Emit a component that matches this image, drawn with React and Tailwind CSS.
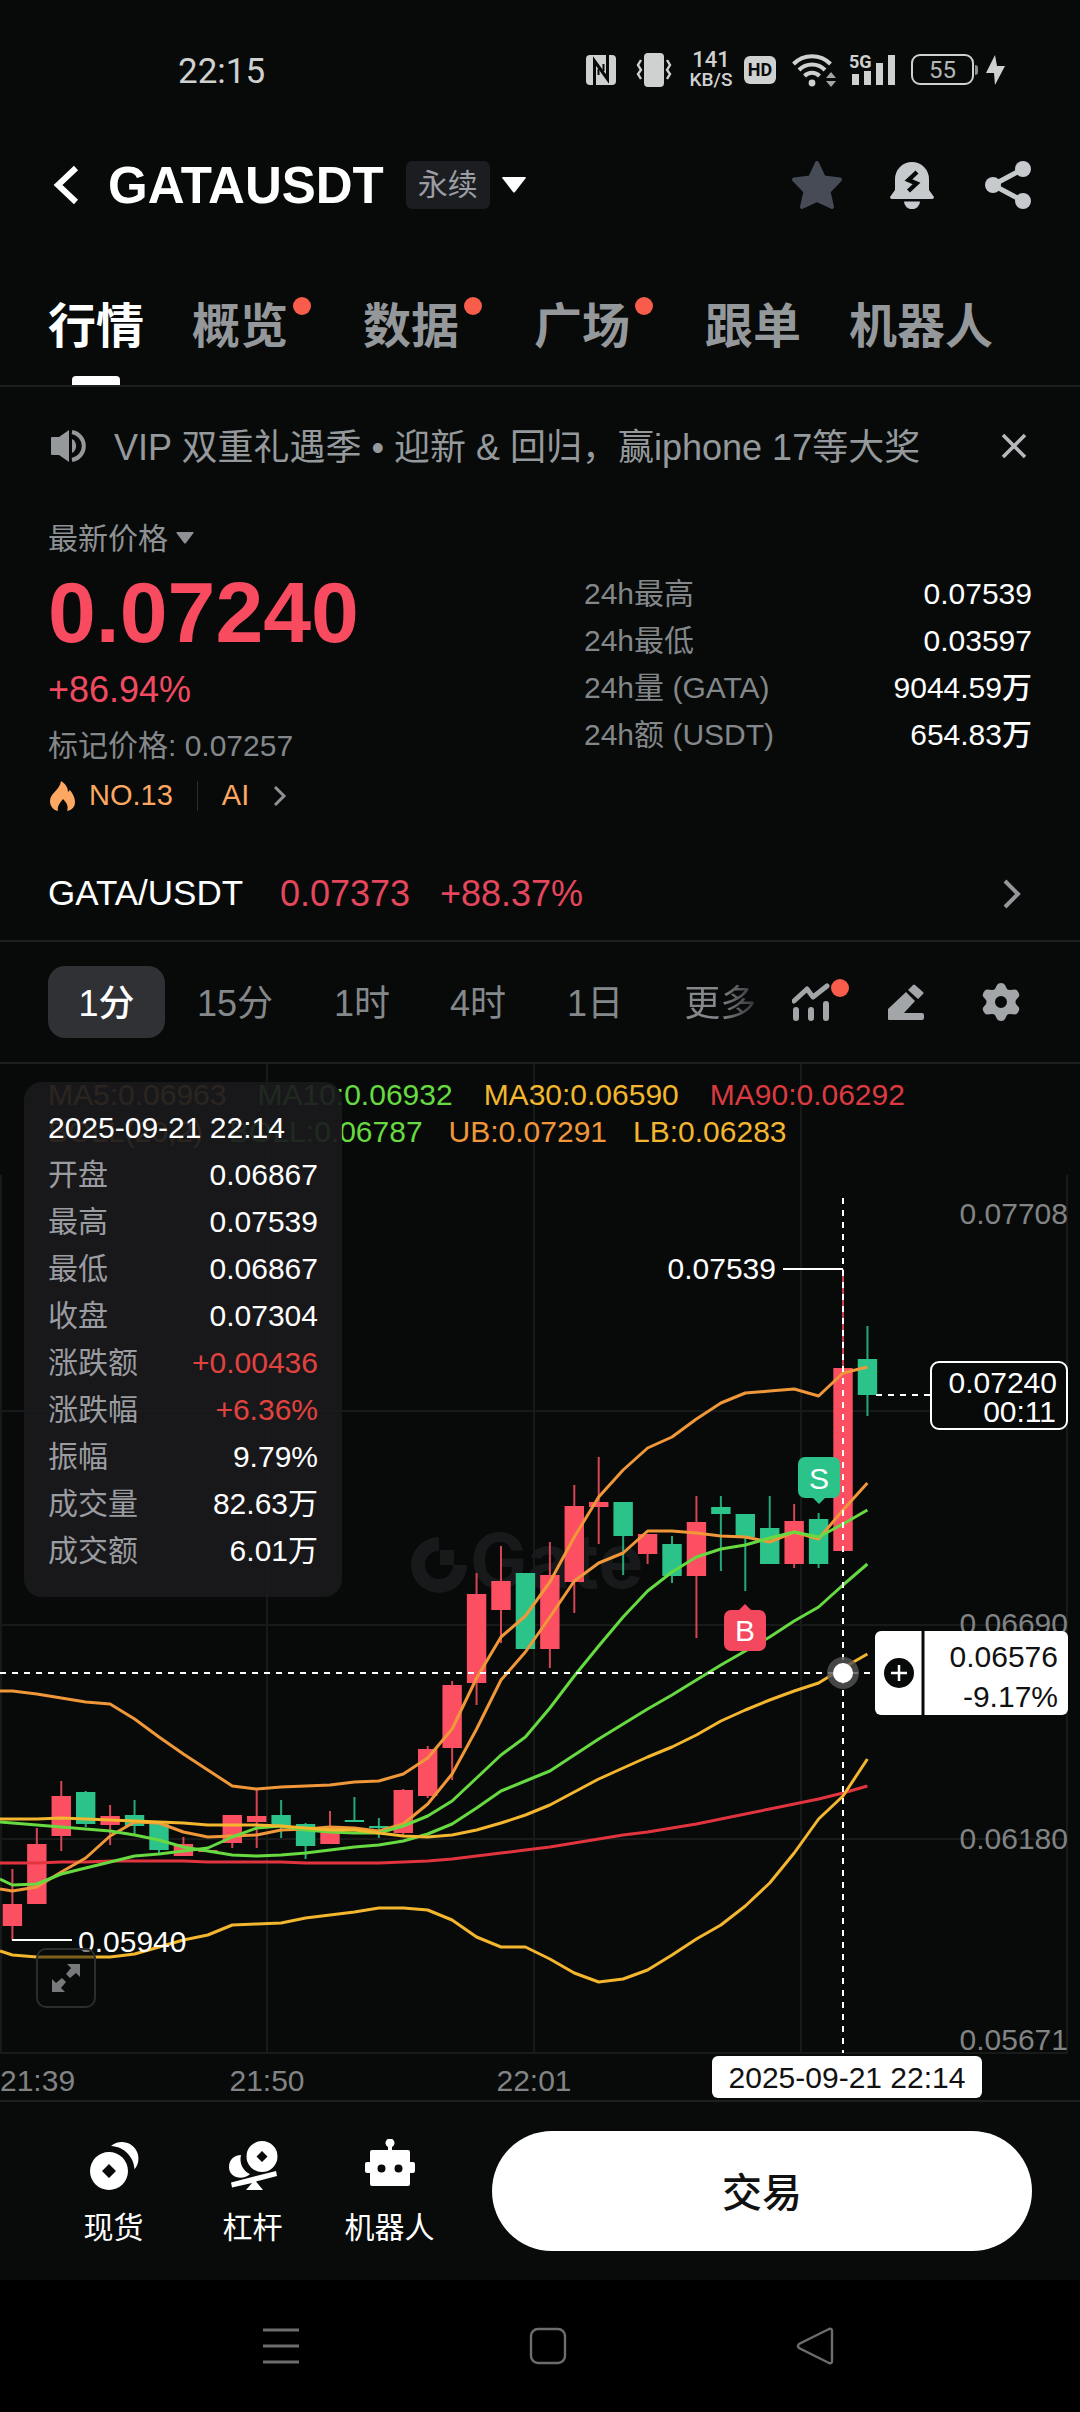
import React from "react";

const UP = "#fc4f61";
const DOWN = "#2cc38a";

/* [bodyTop, bodyBottom, wickTop, wickBottom, rising] in chart units */
const CANDLES = [
  [1904, 1926, 1869, 1940, 1],
  [1844, 1904, 1828, 1904, 1],
  [1796, 1836, 1781, 1851, 1],
  [1792, 1824, 1791, 1827, 0],
  [1816, 1825, 1805, 1845, 1],
  [1815, 1826, 1800, 1835, 0],
  [1824, 1850, 1824, 1854, 0],
  [1844, 1856, 1837, 1856, 1],
  [1850, 1852, 1850, 1852, 1],
  [1815, 1843, 1815, 1848, 1],
  [1816, 1822, 1790, 1848, 1],
  [1815, 1826, 1800, 1838, 0],
  [1824, 1846, 1823, 1859, 0],
  [1827, 1844, 1811, 1844, 1],
  [1820, 1822, 1797, 1822, 0],
  [1826, 1828, 1818, 1838, 0],
  [1790, 1833, 1789, 1835, 1],
  [1749, 1796, 1746, 1798, 1],
  [1685, 1748, 1681, 1780, 1],
  [1594, 1683, 1573, 1705, 1],
  [1581, 1610, 1546, 1643, 1],
  [1573, 1649, 1573, 1649, 0],
  [1575, 1649, 1542, 1668, 1],
  [1506, 1582, 1485, 1613, 1],
  [1502, 1507, 1457, 1544, 1],
  [1502, 1536, 1502, 1575, 0],
  [1534, 1554, 1534, 1564, 1],
  [1544, 1576, 1536, 1583, 0],
  [1522, 1576, 1496, 1638, 1],
  [1507, 1514, 1496, 1571, 0],
  [1514, 1537, 1514, 1591, 0],
  [1528, 1564, 1496, 1564, 0],
  [1521, 1564, 1504, 1568, 1],
  [1519, 1564, 1513, 1568, 0],
  [1368, 1551, 1269, 1551, 1],
  [1359, 1395, 1326, 1416, 0],
];

/* First value sits on the left edge, the rest on the candle centres. */
const LINES = [
  { color: "#e2343e", ys: [1863, 1863, 1863, 1862, 1862, 1861, 1861, 1861, 1861, 1862, 1862, 1862, 1862, 1863, 1863, 1863, 1863, 1862, 1861, 1859, 1856, 1853, 1850, 1847, 1843, 1839, 1835, 1832, 1828, 1824, 1819, 1814, 1809, 1804, 1799, 1793, 1786] },
  { color: "#f0973a", ys: [1691, 1691, 1694, 1698, 1702, 1704, 1719, 1737, 1754, 1770, 1786, 1789, 1787, 1786, 1785, 1782, 1781, 1774, 1758, 1729, 1678, 1637, 1616, 1582, 1537, 1497, 1470, 1448, 1437, 1419, 1403, 1393, 1391, 1389, 1396, 1373, 1367] },
  { color: "#f0973a", ys: [1889, 1891, 1887, 1872, 1858, 1836, 1822, 1823, 1832, 1837, 1836, 1835, 1830, 1829, 1827, 1828, 1831, 1824, 1804, 1774, 1729, 1680, 1652, 1617, 1581, 1563, 1553, 1531, 1531, 1533, 1536, 1537, 1542, 1532, 1539, 1510, 1483] },
  { color: "#67d941", ys: [1822, 1823, 1825, 1827, 1829, 1831, 1835, 1840, 1847, 1851, 1855, 1856, 1855, 1853, 1850, 1847, 1845, 1841, 1834, 1824, 1808, 1791, 1781, 1771, 1755, 1739, 1724, 1709, 1695, 1680, 1665, 1651, 1637, 1621, 1607, 1585, 1564] },
  { color: "#67d941", ys: [1879, 1885, 1884, 1874, 1868, 1862, 1856, 1854, 1851, 1848, 1837, 1828, 1826, 1830, 1832, 1833, 1833, 1826, 1816, 1801, 1778, 1755, 1737, 1708, 1676, 1646, 1617, 1591, 1572, 1557, 1549, 1545, 1538, 1532, 1537, 1524, 1510] },
  { color: "#f3b62e", ys: [1819, 1819, 1819, 1818, 1819, 1820, 1821, 1822, 1823, 1825, 1825, 1825, 1826, 1828, 1830, 1830, 1833, 1836, 1837, 1835, 1830, 1823, 1815, 1805, 1792, 1779, 1768, 1757, 1747, 1735, 1721, 1710, 1700, 1691, 1683, 1668, 1654] },
  { color: "#f3b62e", ys: [1951, 1955, 1957, 1957, 1957, 1957, 1954, 1947, 1940, 1935, 1925, 1924, 1923, 1918, 1915, 1912, 1908, 1908, 1910, 1920, 1937, 1947, 1947, 1959, 1973, 1982, 1979, 1970, 1955, 1939, 1925, 1906, 1883, 1853, 1819, 1796, 1759] },
];

const STEP = 24.43;
const cx = (i) => 12.4 + STEP * i;

const linePoints = (ys) =>
  ys.map((y, i) => `${i === 0 ? 0 : cx(i - 1).toFixed(1)},${y}`).join(" ");

function StatusBar() {
  return (
    <div className="flex h-[138px] items-center justify-between pt-px pr-[74px] pl-[178px] text-[#cfd1d0]">
      <span className="pt-1 font-[Roboto] text-[35px] leading-none">22:15</span>
      <div className="flex items-center">
        <svg className="h-[30px] w-[30px]" viewBox="0 0 30 30" aria-hidden="true">
          <rect width="30" height="30" rx="4" fill="currentColor" />
          <path d="M8.500 30V6L21.500 24V0" fill="none" stroke="#070a09" strokeWidth="3" />
          <path d="M12.500 14v6M17.500 9v7" stroke="#070a09" strokeWidth="2" />
        </svg>
        <svg className="ml-5 h-[34px] w-[36px]" viewBox="0 0 36 34" aria-hidden="true">
          <rect x="8" width="20" height="34" rx="4" fill="currentColor" />
          <path d="M5 7l-3 5 3 5-3 4 3 5M31 7l3 5-3 5 3 4-3 5" fill="none" stroke="currentColor" strokeWidth="2.400" />
        </svg>
        <span className="ml-[17px] flex w-[44px] flex-col items-center font-[Roboto] font-medium">
          <span className="text-[22px] leading-[20px]">141</span>
          <span className="text-[19px] leading-[19px]">KB/S</span>
        </span>
        <span className="ml-[11px] flex h-[28px] w-[32px] items-center justify-center rounded-[6px] bg-[#cfd1d0] font-[Roboto] text-[18px] leading-none font-bold text-[#070a09]">HD</span>
        <svg className="ml-4 h-[34px] w-[44px]" viewBox="0 0 44 34" aria-hidden="true">
          <g fill="none" stroke="currentColor" strokeWidth="4">
            <path d="M1.500 11a26 26 0 0 1 37 0" />
            <path d="M7 17a18 18 0 0 1 26 0" />
            <path d="M12.500 23a10.500 10.500 0 0 1 15 0" />
          </g>
          <circle cx="20" cy="30" r="3.400" fill="currentColor" />
          <path d="M34 25l5-6 5 6zM34 28l5 6 5-6z" fill="#a4a6a5" />
        </svg>
        <span className="relative ml-[13px] h-[32px] w-[46px]">
          <svg className="h-[32px] w-[46px]" viewBox="0 0 46 32" aria-hidden="true">
            <path d="M3 20h7v11H3zM15 17h7v14h-7zM27 9h7v22h-7zM39 1h7v30h-7z" fill="currentColor" />
          </svg>
          <span className="absolute -top-px left-0 font-[Roboto] text-[18px] leading-none font-bold">5G</span>
        </span>
        <span className="ml-4 flex h-[31px] w-[63px] items-center justify-center rounded-[9px] border-2 border-[#cfd1d0] font-[Roboto] text-[24px] leading-none text-[#b5b7b6]">55</span>
        <span className="ml-px h-[10px] w-[3px] rounded-r bg-[#8e908f]" />
        <svg className="ml-2 h-[30px] w-[20px]" viewBox="0 0 20 30" aria-hidden="true">
          <path d="M9 0L0 18h8l1 12L19 11h-8z" fill="currentColor" />
        </svg>
      </div>
    </div>
  );
}

function TitleBar() {
  return (
    <header className="flex h-[94px] items-center pr-[49px] pl-[52px]">
      <button type="button" aria-label="返回" className="text-white">
        <svg className="h-[40px] w-[28px]" viewBox="0 0 28 40">
          <path d="M24 3L6 20l18 17" fill="none" stroke="currentColor" strokeWidth="6" />
        </svg>
      </button>
      <h1 className="ml-7 text-[51px] leading-none font-bold text-white">GATAUSDT</h1>
      <button type="button" className="ml-[22px] flex items-center gap-3">
        <span className="flex h-12 items-center rounded-[6px] bg-[#1c1d21] px-3 text-[30px] leading-none text-[#9a9ea3]">永续</span>
        <svg className="h-[16px] w-[24px]" viewBox="0 0 24 16" aria-hidden="true">
          <path d="M1 0h22q1.500 0 .6 1.200L13 15q-1 1-2 0L.4 1.200Q-.5 0 1 0z" fill="#fff" />
        </svg>
      </button>
      <div className="ml-auto flex items-center text-[#c6cacd]">
        <button type="button" aria-label="收藏">
          <svg className="h-[50px] w-[52px]" viewBox="0 0 52 50">
            <path d="M26 3l6.800 14.500L49 19.500 37.500 31.500 41 47 26 40 11 47l3.500-15.500L3 19.500l16.200-2z" fill="#474b56" stroke="#474b56" strokeWidth="4" strokeLinejoin="round" />
          </svg>
        </button>
        <button type="button" aria-label="提醒" className="ml-[47px]">
          <svg className="h-[48px] w-[44px]" viewBox="0 0 44 48">
            <path d="M5 29V18a17 17 0 0 1 34 0v11l5 7q0 2-2 2H2q-2 0-2-2z" fill="currentColor" />
            <path d="M14 40.500h16a7.800 7.500 0 0 1-16 0z" fill="currentColor" />
            <path d="M27 11l-8.500 8 8 3.500-8 7.500" fill="none" stroke="#070a09" strokeWidth="4.400" />
          </svg>
        </button>
        <button type="button" aria-label="分享" className="ml-[51px]">
          <svg className="h-[48px] w-[46px]" viewBox="0 0 46 48">
            <path d="M38 8L8 24l30 16" fill="none" stroke="currentColor" strokeWidth="5" />
            <circle cx="38" cy="8" r="8" fill="currentColor" />
            <circle cx="8" cy="24" r="8" fill="currentColor" />
            <circle cx="38" cy="40" r="8" fill="currentColor" />
          </svg>
        </button>
      </div>
    </header>
  );
}

const TABS = [
  { label: "行情", active: true },
  { label: "概览", dot: true },
  { label: "数据", dot: true },
  { label: "广场", dot: true },
  { label: "跟单" },
  { label: "机器人" },
];

function Tabs() {
  return (
    <nav className="flex h-[155px] gap-12 border-b-2 border-[#1d1f1f] px-12 text-[48px] leading-none font-bold text-[#95989b]">
      {TABS.map((t) => (
        <button
          key={t.label}
          type="button"
          className={
            t.active
              ? "flex flex-col items-center justify-between pt-[71px] text-white"
              : "flex items-start pt-[71px]"
          }
        >
          <span className="whitespace-nowrap">{t.label}</span>
          {t.active && <span className="h-[9px] w-12 rounded-t-[4px] bg-white" />}
          {t.dot && <span className="-mt-[6px] mr-1 ml-[5px] h-[18px] w-[18px] rounded-full bg-[#f85d4b]" />}
        </button>
      ))}
    </nav>
  );
}

function Notice() {
  return (
    <div className="flex h-[118px] items-center pr-[52px] pl-[50px] text-[#95999c]">
      <svg className="h-[34px] w-[38px]" viewBox="0 0 38 34" aria-hidden="true">
        <path d="M1 9q0-1 1-1h7L19 1v32L9 26H2q-1 0-1-1z" fill="currentColor" />
        <path d="M22 10a8 8 0 0 1 0 14z" fill="currentColor" />
        <path d="M22 3a14.200 14.200 0 0 1 0 28" fill="none" stroke="currentColor" strokeWidth="4" />
      </svg>
      <p className="ml-[26px] pt-[3px] text-[36px] leading-none whitespace-nowrap">VIP 双重礼遇季 • 迎新 &amp; 回归，赢iphone 17等大奖</p>
      <button type="button" aria-label="关闭" className="ml-auto text-[#b6b9bb]">
        <svg className="h-[28px] w-[28px]" viewBox="0 0 28 28">
          <path d="M3 3l22 22M25 3L3 25" stroke="currentColor" strokeWidth="3.600" />
        </svg>
      </button>
    </div>
  );
}

const STATS = [
  ["24h最高", "0.07539"],
  ["24h最低", "0.03597"],
  ["24h量 (GATA)", "9044.59万"],
  ["24h额 (USDT)", "654.83万"],
];

function Summary() {
  return (
    <section className="flex justify-between pt-[13px] pr-12 pl-12 text-[30px] text-[#84878a]">
      <div>
        <button type="button" className="flex h-10 items-center gap-2 text-[#8e9194]">
          <span>最新价格</span>
          <svg className="h-[12px] w-[18px]" viewBox="0 0 18 12" aria-hidden="true">
            <path d="M1 0h16q1 0 .5 1L10 11q-1 1-2 0L.5 1Q0 0 1 0z" fill="currentColor" />
          </svg>
        </button>
        <div className="mt-3 h-[84px] text-[86px] leading-[84px] font-bold text-[#f84b60]">0.07240</div>
        <div className="mt-4 h-10 text-[36px] leading-10 text-[#f04a60]">+86.94%</div>
        <div className="mt-4 h-10 leading-10">标记价格: 0.07257</div>
        <div className="mt-[10px] flex h-10 items-center text-[29px] font-medium text-[#fca862]">
          <svg className="ml-[2px] h-[30px] w-[25px]" viewBox="0 0 25 30" aria-hidden="true">
            <path d="M11 0c5 3 7 7 7 11l2-2c3 4 5 8 5 12 0 5-3 8-8 9 2-5-1-9-4-12-3 4-6 7-5 12-5-1-8-5-8-10C0 12 10 9 11 0z" fill="currentColor" />
          </svg>
          <a href="#rank" className="ml-[14px]">NO.13</a>
          <span className="ml-6 h-[30px] w-px bg-[#2b2d2d]" />
          <a href="#ai" className="ml-6 flex items-center">
            AI
            <svg className="ml-6 h-[22px] w-[14px]" viewBox="0 0 14 22" aria-hidden="true">
              <path d="M2 2l9 9-9 9" fill="none" stroke="#8e9194" strokeWidth="3" />
            </svg>
          </a>
        </div>
      </div>
      <dl className="w-[448px] pt-[52px] leading-[47px]">
        {STATS.map(([k, v]) => (
          <div key={k} className="flex h-[47px] justify-between">
            <dt>{k}</dt>
            <dd className="font-medium text-white">{v}</dd>
          </div>
        ))}
      </dl>
    </section>
  );
}

function SpotRow() {
  return (
    <a href="#spot" className="mt-[29px] flex h-[97px] items-center border-b-2 border-[#1d1f1f] pt-[2px] pr-[58px] pl-12 text-[36px] text-[#e4465c]">
      <span className="w-[232px] text-[35px] font-medium text-white">GATA/USDT</span>
      <span className="w-[160px]">0.07373</span>
      <span>+88.37%</span>
      <svg className="ml-auto h-[30px] w-[20px]" viewBox="0 0 20 30" aria-hidden="true">
        <path d="M3 2l13 13L3 28" fill="none" stroke="#94989b" strokeWidth="4" />
      </svg>
    </a>
  );
}

function Intervals() {
  return (
    <div className="flex h-[122px] items-center border-b-2 border-[#1d1f1f] pr-[60px] pl-12 text-[36px] leading-none text-[#85888b]">
      <button type="button" className="h-[72px] w-[117px] rounded-[17px] bg-[#303135] pt-[3px] font-medium text-white">1分</button>
      <button type="button" className="ml-8 pt-[3px]">15分</button>
      <button type="button" className="ml-[61px] pt-[3px]">1时</button>
      <button type="button" className="ml-[60px] pt-[3px]">4时</button>
      <button type="button" className="ml-[61px] pt-[3px]">1日</button>
      <button type="button" className="ml-[61px] bg-gradient-to-r from-[#85888b] from-50% to-[#303335] bg-clip-text pt-[3px] text-transparent">更多</button>
      <div className="ml-auto flex items-center text-[#a2a6a9]">
        <button type="button" aria-label="指标" className="relative">
          <svg className="h-[38px] w-[38px]" viewBox="0 0 38 38">
            <path d="M2 18L15 6l6 8L35 3" fill="none" stroke="currentColor" strokeWidth="5" strokeLinejoin="round" strokeLinecap="round" />
            <path d="M4 27v8M19 27v8M34 21v14" stroke="currentColor" strokeWidth="6" strokeLinecap="round" />
          </svg>
          <span className="absolute -top-1 left-[39px] h-[18px] w-[18px] rounded-full bg-[#f85d4b]" />
        </button>
        <button type="button" aria-label="画线" className="ml-[58px]">
          <svg className="h-[36px] w-[36px]" viewBox="0 0 36 36">
            <path d="M0 35V25L18 8l9 9-11 12h18q2 0 2 2v3q0 2-2 2H1q-1 0-1-1zM20 6l5-5q1-1 2 0l8 7q1 1 0 2l-5 5z" fill="currentColor" />
          </svg>
        </button>
        <button type="button" aria-label="设置" className="ml-[58px]">
          <svg className="h-[38px] w-[38px]" viewBox="0 0 38 38">
            <path fillRule="evenodd" d="M15 2q1-2 4-2t4 2l2 4q1 1 3 1l5-.5q2 0 3.500 3t0 4.500l-2.500 3q-1 2 0 4l2.500 3q1.500 1.500 0 4.500T33 31.500L28 31q-2 0-3 1l-2 4q-1 2-4 2t-4-2l-2-4q-1-1-3-1l-5 .5q-2 0-3.500-3t0-4.500L4 21q1-2 0-4l-2.500-3Q0 12.500 1.500 9.500T5 6.500L10 7q2 0 3-1zM19 13a6 6 0 1 0 0 12 6 6 0 0 0 0-12z" fill="currentColor" />
          </svg>
        </button>
      </div>
    </div>
  );
}

const TIP = [
  ["开盘", "0.06867"],
  ["最高", "0.07539"],
  ["最低", "0.06867"],
  ["收盘", "0.07304"],
  ["涨跌额", "+0.00436", true],
  ["涨跌幅", "+6.36%", true],
  ["振幅", "9.79%"],
  ["成交量", "82.63万"],
  ["成交额", "6.01万"],
];

function Chart() {
  return (
    <section className="relative border-b-2 border-[#1d1f1f]">
      <svg className="block w-full text-[30px]" viewBox="0 1064 1080 1036" role="img" aria-label="GATAUSDT 1分 K线">
        <g stroke="#171a19" strokeWidth="2">
          <path d="M1 1175V2053M267 1064V2053M534 1064V2053M801 1064V2053M1067 1175V2053" />
          <path d="M0 1411H1067M0 1625H1067M0 1839H1067M0 2053H1067" />
        </g>
        <g fill="#17191a">
          <path d="M439 1537a28 28 0 1 0 28 28h-14a14 14 0 1 1-14-14z" />
          <path d="M440 1550h14v15h-14z" />
          <text x="470" y="1588" className="font-[Inter] text-[76px] font-bold">Gate</text>
        </g>
        <g fill="#818385" textAnchor="end">
          <text x="1068" y="1224">0.07708</text>
          <text x="1068" y="1634">0.06690</text>
          <text x="1068" y="1849">0.06180</text>
          <text x="1068" y="2050">0.05671</text>
        </g>
        <g fill="#818385">
          <text x="0" y="2091">21:39</text>
          <text x="267" y="2091" textAnchor="middle">21:50</text>
          <text x="534" y="2091" textAnchor="middle">22:01</text>
        </g>
        {CANDLES.map(([top, bottom, high, low, rising], i) => (
          <g key={i} fill={rising ? UP : DOWN}>
            <rect x={cx(i) - 1} y={high} width="2" height={low - high} opacity="0.85" />
            <rect x={cx(i) - 9.700} y={top} width="19.400" height={bottom - top} />
          </g>
        ))}
        {LINES.map((l, i) => (
          <polyline key={i} points={linePoints(l.ys)} fill="none" stroke={l.color} strokeWidth="3" strokeLinejoin="round" />
        ))}
        <g fill="#fff">
          <text x="776" y="1279" textAnchor="end">0.07539</text>
          <text x="78" y="1952">0.05940</text>
        </g>
        <path d="M783 1269H843M12 1940H72" stroke="#fff" strokeWidth="2" />

        <rect x="798" y="1457" width="42" height="41" rx="7" fill={DOWN} />
        <path d="M813 1498h12l-6 6z" fill={DOWN} />
        <rect x="724" y="1610" width="42" height="41" rx="7" fill="#f4485e" />
        <path d="M739 1610h12l-6-6z" fill="#f4485e" />
        <g fill="#fff" textAnchor="middle">
          <text x="819" y="1489">S</text>
          <text x="745" y="1641">B</text>
        </g>

        <g stroke="#fff" strokeWidth="2" strokeDasharray="6 6">
          <path d="M0 1673H872M843 1198V2053M876 1395H930" />
        </g>
        <circle cx="843" cy="1673" r="16" fill="#555" opacity="0.8" />
        <circle cx="843" cy="1673" r="10" fill="#fff" />

        <rect x="931" y="1362" width="136" height="67" rx="8" fill="#070a09" stroke="#fff" strokeWidth="2" />
        <g fill="#fff" textAnchor="end">
          <text x="1057" y="1393">0.07240</text>
          <text x="1056" y="1422">00:11</text>
        </g>

        <rect x="875" y="1631" width="193" height="84" rx="6" fill="#fff" />
        <path d="M923 1631v84" stroke="#070a09" strokeWidth="3" />
        <circle cx="899" cy="1673" r="15" fill="#070a09" />
        <path d="M891 1673h16M899 1665v16" stroke="#fff" strokeWidth="2.500" />
        <g fill="#111" textAnchor="end">
          <text x="1058" y="1667">0.06576</text>
          <text x="1058" y="1707">-9.17%</text>
        </g>

        <rect x="712" y="2056" width="270" height="42" rx="6" fill="#fff" />
        <text x="847" y="2088" textAnchor="middle" fill="#111">2025-09-21 22:14</text>
      </svg>

      <div className="absolute top-3 left-12 text-[30px] leading-[37px] whitespace-nowrap">
        <div className="flex gap-[31px]">
          <span className="text-[#f0973a]">MA5:0.06963</span>
          <span className="text-[#67d941]">MA10:0.06932</span>
          <span className="text-[#f3b62e]">MA30:0.06590</span>
          <span className="text-[#dc3a40]">MA90:0.06292</span>
        </div>
        <div className="flex gap-[26px]">
          <span className="text-[#f0973a]">BOLL(20,2)</span>
          <span className="text-[#67d941]">BOLL:0.06787</span>
          <span className="text-[#f0973a]">UB:0.07291</span>
          <span className="text-[#f3b62e]">LB:0.06283</span>
        </div>
      </div>

      <div className="absolute top-[18px] left-6 w-[318px] rounded-[18px] bg-[#1a1a1d]/92 px-6 pt-[22px] pb-[23px] text-[30px] leading-[47px] text-white">
        <div>2025-09-21 22:14</div>
        <dl>
          {TIP.map(([k, v, red]) => (
            <div key={k} className="flex h-[47px] justify-between">
              <dt className="text-[#9a9ca0]">{k}</dt>
              <dd className={red ? "text-[#e0433f]" : "text-white"}>{v}</dd>
            </div>
          ))}
        </dl>
      </div>

      <button type="button" aria-label="全屏" className="absolute bottom-[92px] left-9 flex h-[60px] w-[60px] items-center justify-center rounded-[10px] border-2 border-[#2b2d2d] bg-[#070a09]/50 text-[#77797a]">
        <svg className="h-[28px] w-[28px]" viewBox="0 0 28 28">
          <path d="M15 0h13v13l-4-4-6 5-4-4 5-6zM13 28H0V15l4 4 6-5 4 4-5 6z" fill="currentColor" />
        </svg>
      </button>
    </section>
  );
}

function ActionBar() {
  return (
    <div className="flex h-[178px] items-center bg-[#080b0a] pr-12 pl-[54px] text-[30px] leading-none text-white">
      <div className="flex flex-1 items-center">
        <button type="button" className="flex w-[119px] flex-col items-center gap-[22px]">
          <svg className="h-[52px] w-[52px]" viewBox="0 0 52 52" aria-hidden="true">
            <path d="M23 7A16.600 16.600 0 0 1 46.500 30.300C46 18 36 7.500 23 7z" fill="currentColor" />
            <path fillRule="evenodd" d="M21 13a19 19 0 1 0 0 38 19 19 0 0 0 0-38zM21 25l7 7-7 7-7-7z" fill="currentColor" />
          </svg>
          <span>现货</span>
        </button>
        <button type="button" className="ml-5 flex w-[119px] flex-col items-center gap-[22px]">
          <svg className="h-[52px] w-[50px]" viewBox="0 0 50 52" aria-hidden="true">
            <path fillRule="evenodd" d="M34 2a15.500 15.500 0 1 0 0 31 15.500 15.500 0 0 0 0-31zM34 12l5.500 5.500-5.500 5.500-5.500-5.500z" fill="currentColor" />
            <path d="M13 16C11 24 15 32 22 35 15 42 1 39 1 28 1 20 7 16 13 16z" fill="currentColor" />
            <path d="M3 43.500L48 32l1 5-21 5.500L35 51H18l6-7L4 48.500z" fill="currentColor" />
          </svg>
          <span>杠杆</span>
        </button>
        <button type="button" className="ml-[18px] flex w-[119px] flex-col items-center gap-[22px]">
          <svg className="h-[52px] w-[50px]" viewBox="0 0 50 52" aria-hidden="true">
            <path fillRule="evenodd" d="M23 11V8a4.500 4.500 0 1 1 4 0v3h16q2 0 2 2v10h3q2 0 2 2v7q0 2-2 2h-3v11q0 2-2 2H7q-2 0-2-2V34H2q-2 0-2-2v-7q0-2 2-2h3V13q0-2 2-2zM16.500 25.500a4 4 0 1 0 0 8 4 4 0 0 0 0-8zM33.500 25.500a4 4 0 1 0 0 8 4 4 0 0 0 0-8z" fill="currentColor" />
          </svg>
          <span>机器人</span>
        </button>
      </div>
      <button type="button" className="h-[120px] w-[540px] rounded-full bg-white pt-1 text-[40px] font-medium text-[#111]">交易</button>
    </div>
  );
}

function SystemNav() {
  return (
    <div className="flex h-[132px] items-center justify-between bg-black pr-[246px] pl-[262px] text-[#6d6d6d]">
      <button type="button" aria-label="最近任务">
        <svg className="h-[38px] w-[38px]" viewBox="0 0 38 38">
          <path d="M1 3h36M1 19h36M1 35h36" stroke="currentColor" strokeWidth="3" />
        </svg>
      </button>
      <button type="button" aria-label="主屏幕">
        <svg className="h-[38px] w-[38px]" viewBox="0 0 38 38">
          <rect x="2" y="2" width="34" height="34" rx="7" fill="none" stroke="currentColor" strokeWidth="2.400" />
        </svg>
      </button>
      <button type="button" aria-label="系统返回">
        <svg className="h-[38px] w-[38px]" viewBox="0 0 38 38">
          <path d="M33 2q3-1 3 2v30q0 3-3 2L3 21q-2-2 0-4z" fill="none" stroke="currentColor" strokeWidth="2.400" />
        </svg>
      </button>
    </div>
  );
}

export default function App() {
  return (
    <div className="min-h-screen bg-[#070a09] font-['Liberation_Sans','Noto_Sans_CJK_SC',sans-serif]">
      <StatusBar />
      <TitleBar />
      <Tabs />
      <Notice />
      <Summary />
      <SpotRow />
      <Intervals />
      <Chart />
      <ActionBar />
      <SystemNav />
    </div>
  );
}
